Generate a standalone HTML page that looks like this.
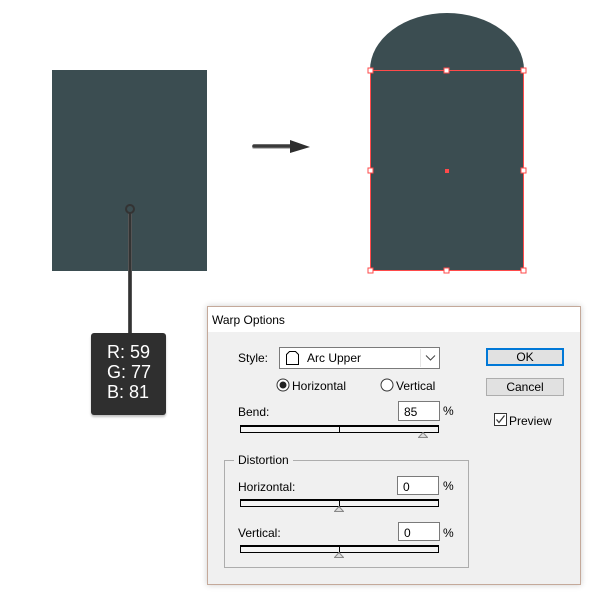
<!DOCTYPE html>
<html><head><meta charset="utf-8"><style>
*{margin:0;padding:0;box-sizing:border-box}
body{width:600px;height:600px;background:#fff;position:relative;overflow:hidden;font-family:"Liberation Sans","DejaVu Sans",sans-serif}
.a{position:absolute}
.t{position:absolute;font-size:12px;color:#000;line-height:14px}
.inp{position:absolute;background:#fff;border:1px solid #7a7a7a;font-size:12px;padding:3px 0 0 5px;line-height:14px}
.sl{position:absolute;height:8px;border:1px solid #000;border-top:2px solid #000;background:#f4f4f4}
.th{position:absolute;width:10px;height:6px}
.tk{position:absolute;width:1px;height:6px;background:#000}
</style></head><body>
<div class="a" style="left:52px;top:70px;width:155px;height:201px;background:#3b4d51"></div>
<svg class="a" style="left:0;top:0" width="600" height="340">
<line x1="130" y1="212" x2="130" y2="336" stroke="#555" stroke-width="4"/>
<line x1="130" y1="212" x2="130" y2="336" stroke="#333" stroke-width="2"/>
<circle cx="130" cy="209" r="4" fill="#3b4d51" stroke="#333" stroke-width="2"/>
<path d="M254 147 L292 147" stroke="#bbb" stroke-width="4" stroke-linecap="round"/>
<path d="M254 146 L292 146" stroke="#3a3a3a" stroke-width="3.5" stroke-linecap="round"/>
<path d="M290 140 L310 147 L290 153 Z" fill="#2e2e2e"/>
<path d="M370 271 L370 70 A77 57 0 0 1 524 70 L524 271 Z" fill="#3b4d51"/>
<rect x="370.5" y="70.5" width="153" height="200" fill="none" stroke="#ff4a4a" stroke-width="1"/>
<g fill="#fff" stroke="#ff4a4a">
<rect x="368" y="68" width="5" height="5"/><rect x="444" y="68" width="5" height="5"/><rect x="521" y="68" width="5" height="5"/>
<rect x="368" y="168" width="5" height="5"/><rect x="521" y="168" width="5" height="5"/>
<rect x="368" y="268" width="5" height="5"/><rect x="444" y="268" width="5" height="5"/><rect x="521" y="268" width="5" height="5"/>
</g>
<rect x="445" y="169" width="4" height="4" fill="#ff4a4a"/>
</svg>
<div class="a" style="left:91px;top:333px;width:75px;height:82px;background:#2f2f2f;border-radius:3px;box-shadow:0 2px 2px rgba(0,0,0,.25);color:#fff;font-size:18px;line-height:20px;padding:9px 0 0 16px">R: 59<br>G: 77<br>B: 81</div>

<div class="a" style="left:207px;top:306px;width:374px;height:279px;background:#f0f0f0;border:1px solid #c4a99a;box-shadow:0 0 6px rgba(0,0,0,.2)"></div>
<div class="a" style="left:208px;top:307px;width:372px;height:25px;background:#fff"></div>
<div class="t" style="left:212px;top:313px">Warp Options</div>

<div class="t" style="left:238px;top:351px">Style:</div>
<div class="a" style="left:279px;top:347px;width:161px;height:22px;background:#fff;border:1px solid #7a7a7a"></div>
<svg class="a" style="left:285px;top:350px" width="16" height="16"><path d="M1.5 14.5V4.5L4.5 1.5H10.5L13.5 4.5V14.5Z" fill="none" stroke="#000"/></svg>
<div class="t" style="left:307px;top:351px">Arc Upper</div>
<div class="a" style="left:420px;top:349px;width:1px;height:18px;background:#e5e5e5"></div>
<svg class="a" style="left:425px;top:354px" width="12" height="8"><path d="M1 1.5L5.5 6L10 1.5" fill="none" stroke="#444"/></svg>

<svg class="a" style="left:276px;top:378px" width="14" height="14"><circle cx="7" cy="7" r="6" fill="#fff" stroke="#333"/><circle cx="7" cy="7" r="3.5" fill="#222"/></svg>
<div class="t" style="left:292px;top:379px">Horizontal</div>
<svg class="a" style="left:380px;top:378px" width="14" height="14"><circle cx="7" cy="7" r="6" fill="#fff" stroke="#333"/></svg>
<div class="t" style="left:396px;top:379px">Vertical</div>

<div class="t" style="left:238px;top:405px">Bend:</div>
<div class="inp" style="left:398px;top:401px;width:42px;height:20px">85</div>
<div class="t" style="left:443px;top:404px">%</div>
<div class="sl" style="left:240px;top:425px;width:199px"></div>
<div class="tk" style="left:339px;top:426px"></div>
<svg class="th" style="left:418px;top:432px"><path d="M0.5 5.5L5 0.5L9.5 5.5Z" fill="#ddd" stroke="#888"/></svg>

<div class="a" style="left:486px;top:348px;width:78px;height:18px;background:#e1e1e1;border:2px solid #0078d7"></div>
<div class="t" style="left:486px;top:350px;width:78px;text-align:center">OK</div>
<div class="a" style="left:486px;top:378px;width:78px;height:18px;background:#e1e1e1;border:1px solid #adadad"></div>
<div class="t" style="left:486px;top:380px;width:78px;text-align:center">Cancel</div>
<svg class="a" style="left:494px;top:413px" width="14" height="14"><rect x="0.5" y="0.5" width="12" height="12" fill="#fff" stroke="#333"/><path d="M2.5 6.5L5 9.5L10.5 2.5" fill="none" stroke="#333" stroke-width="1.2"/></svg>
<div class="t" style="left:509px;top:414px">Preview</div>

<div class="a" style="left:224px;top:460px;width:245px;height:108px;border:1px solid #adadad"></div>
<div class="t" style="left:234px;top:453px;background:#f0f0f0;padding:0 4px">Distortion</div>
<div class="t" style="left:238px;top:480px">Horizontal:</div>
<div class="inp" style="left:397px;top:476px;width:42px;height:19px">0</div>
<div class="t" style="left:443px;top:479px">%</div>
<div class="sl" style="left:240px;top:499px;width:199px"></div>
<div class="tk" style="left:339px;top:500px"></div>
<svg class="th" style="left:334px;top:506px"><path d="M0.5 5.5L5 0.5L9.5 5.5Z" fill="#ddd" stroke="#888"/></svg>
<div class="t" style="left:238px;top:526px">Vertical:</div>
<div class="inp" style="left:398px;top:522px;width:42px;height:19px">0</div>
<div class="t" style="left:443px;top:526px">%</div>
<div class="sl" style="left:240px;top:545px;width:199px"></div>
<div class="tk" style="left:339px;top:546px"></div>
<svg class="th" style="left:334px;top:552px"><path d="M0.5 5.5L5 0.5L9.5 5.5Z" fill="#ddd" stroke="#888"/></svg>
</body></html>
